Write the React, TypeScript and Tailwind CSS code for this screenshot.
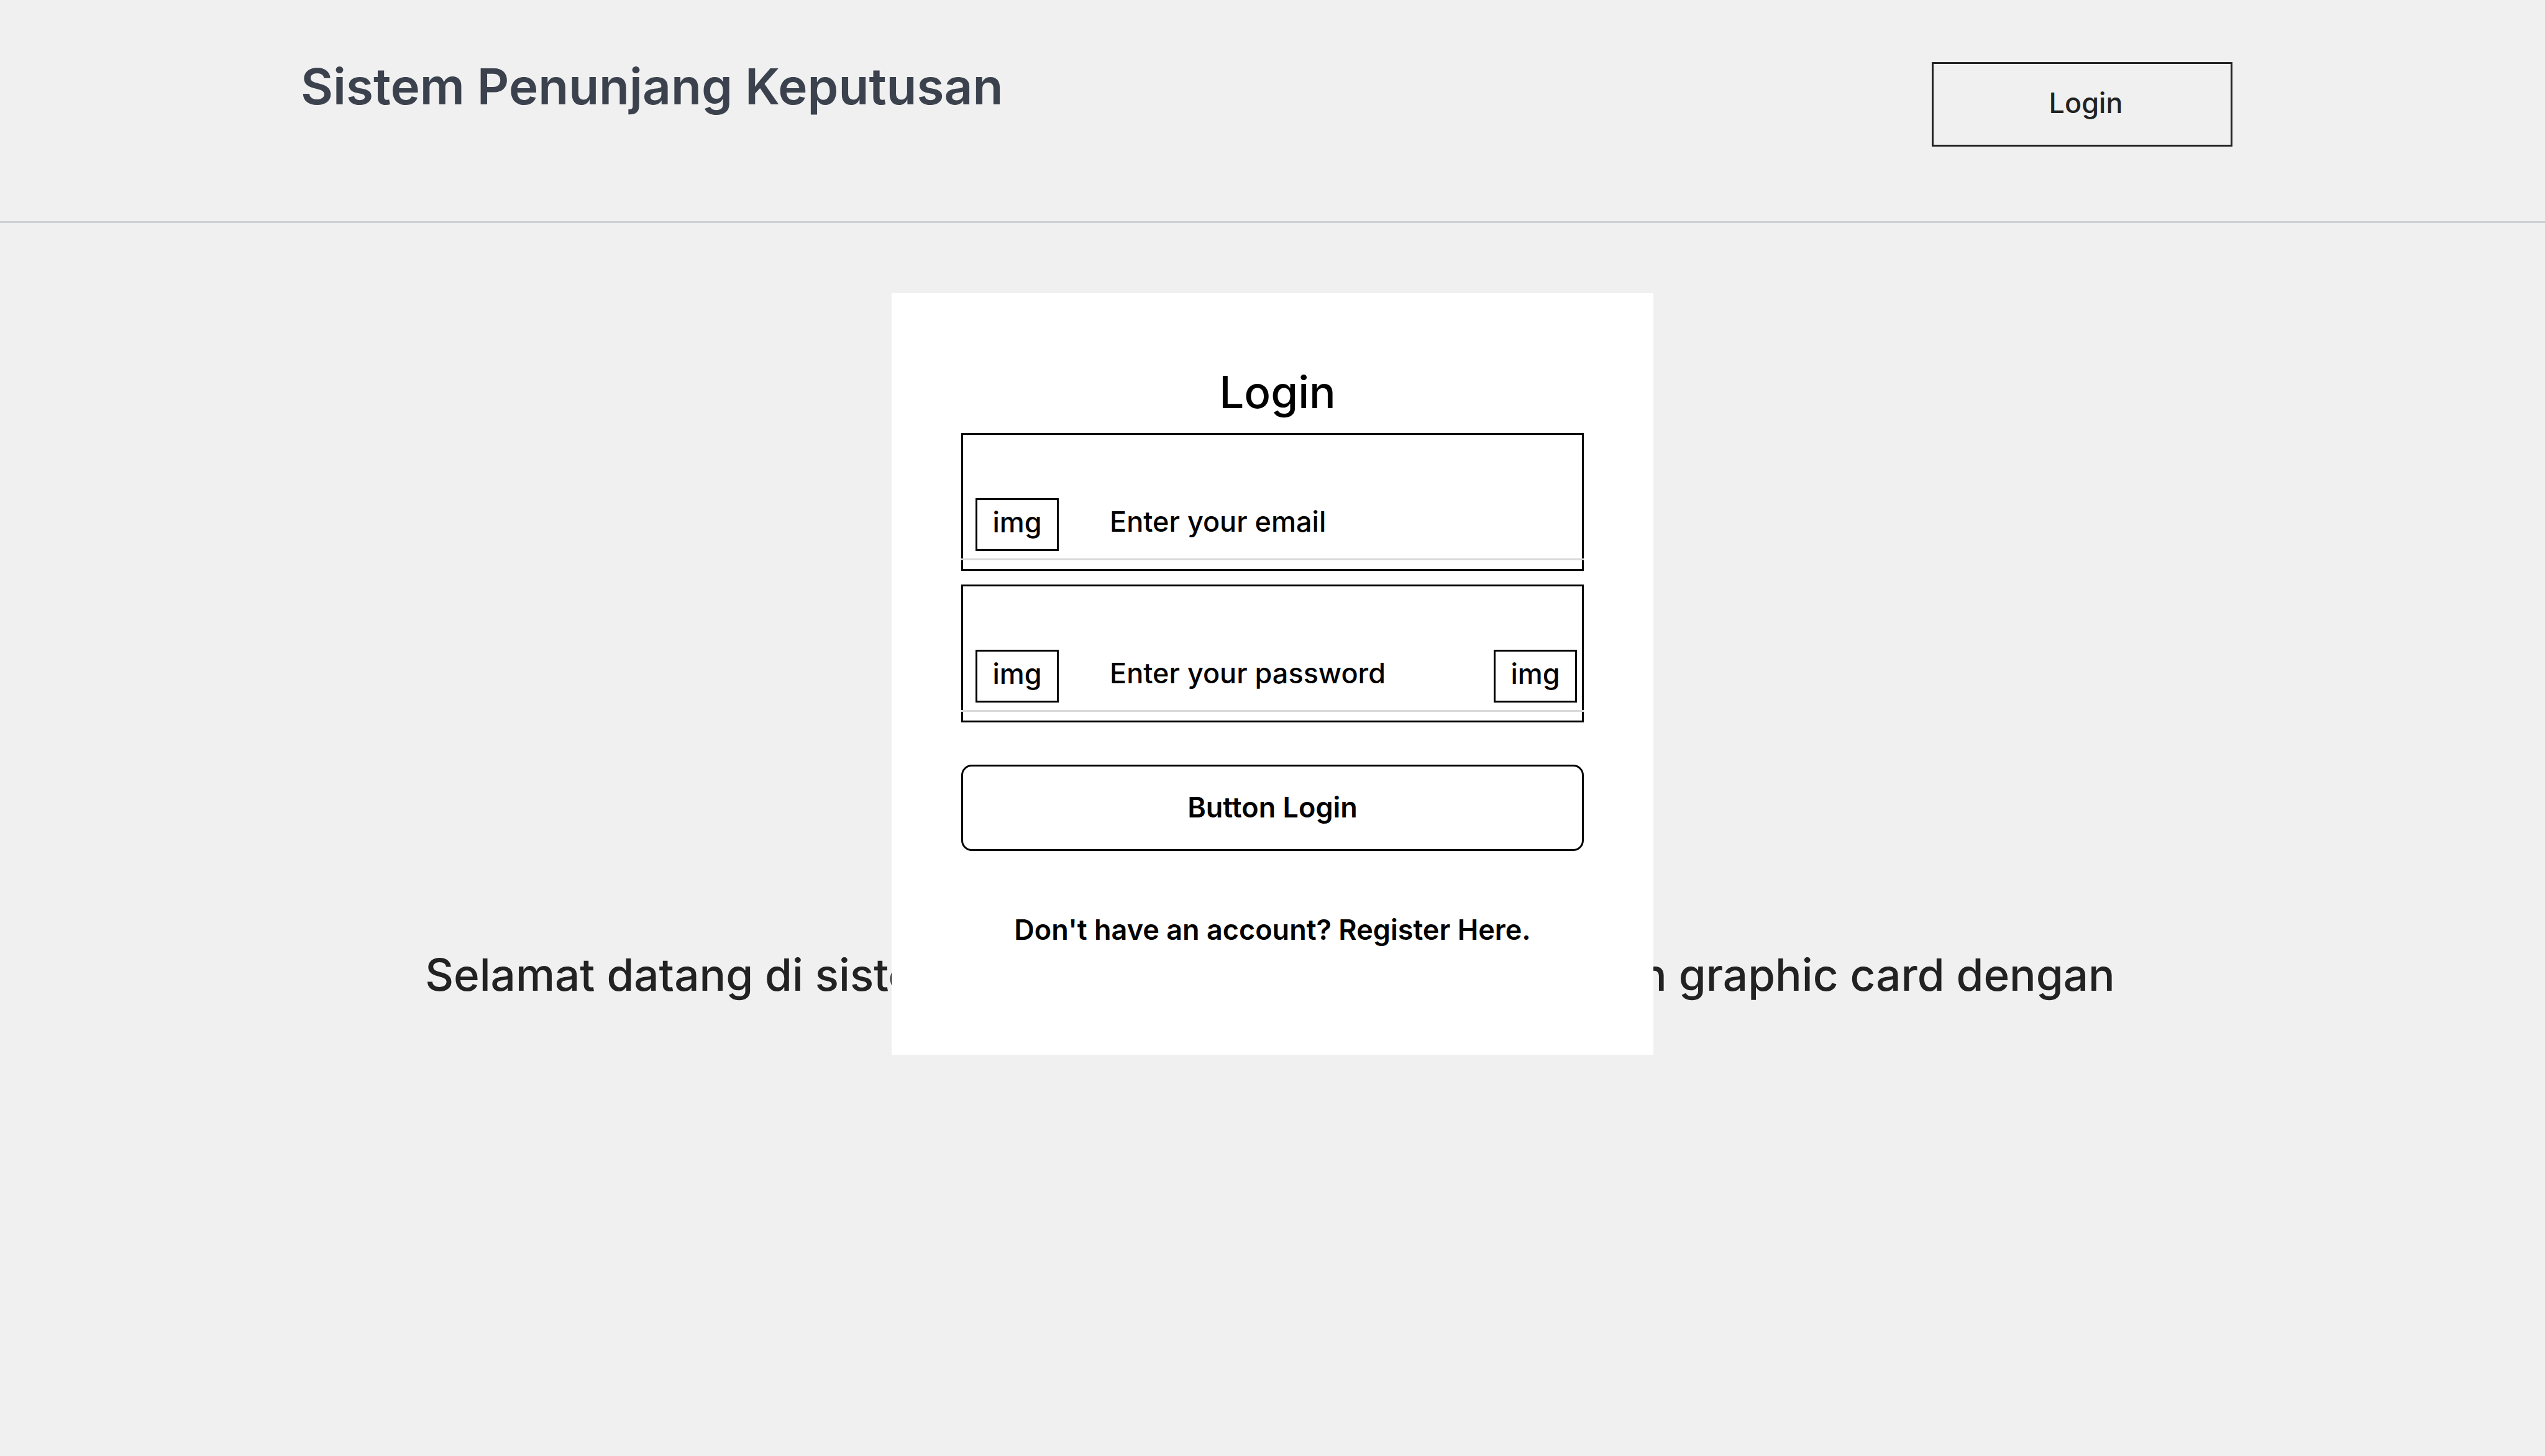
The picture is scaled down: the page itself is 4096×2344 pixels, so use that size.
import type { ReactNode } from "react";

function ImageBox({ children }: { children: ReactNode }) {
  return (
    <span className="flex h-[85px] w-[134px] shrink-0 items-center justify-center border-3 border-black pb-2">
      {children}
    </span>
  );
}

type FieldProps = {
  id: string;
  type: string;
  label: string;
  placeholder: string;
  action?: ReactNode;
};

function Field({ id, type, label, placeholder, action }: FieldProps) {
  return (
    <div className="relative flex items-center border-3 border-black pt-[102px] pr-2 pb-[29px] pl-5">
      <label htmlFor={id}>
        <ImageBox>img</ImageBox>
      </label>
      <input
        id={id}
        type={type}
        aria-label={label}
        placeholder={placeholder}
        className="ml-[82px] h-[85px] min-w-0 flex-1 bg-transparent pb-2.5 outline-none placeholder:text-black placeholder:opacity-100"
      />
      {action}
      <span className="absolute -inset-x-[3px] bottom-3.5 h-[3px] bg-[#d9d9d9]" />
    </div>
  );
}

function Header() {
  return (
    <header className="flex items-start justify-between border-b-3 border-[#cdcfd4] pt-[90px] pr-[503px] pb-[120px] pl-[484px]">
      <h1 className="text-[80px] leading-[97px] font-semibold text-[#3c424d]">
        Sistem Penunjang Keputusan
      </h1>
      <button
        type="button"
        className="mt-2.5 h-[136px] w-[484px] border-3 border-[#222222] pb-1 pl-3 text-[#222222]"
      >
        Login
      </button>
    </header>
  );
}

function LoginCard() {
  return (
    <form
      className="z-10 col-start-1 row-start-1 mt-[113px] flex w-[1226px] flex-col self-start bg-white px-28 pt-[116px] pb-[174px] text-black"
      onSubmit={(event) => event.preventDefault()}
    >
      <h2 className="pl-4 text-center text-[71px] leading-[86px]">Login</h2>
      <div className="mt-[23px] flex flex-col gap-[22px]">
        <Field id="email" type="email" label="Email" placeholder="Enter your email" />
        <Field
          id="password"
          type="password"
          label="Password"
          placeholder="Enter your password"
          action={
            <button type="button" aria-label="Show password">
              <ImageBox>img</ImageBox>
            </button>
          }
        />
      </div>
      <button
        type="submit"
        className="mt-[68px] h-[139px] rounded-[17px] border-3 border-black pb-0.5 font-semibold"
      >
        Button Login
      </button>
      <a href="#register" className="mt-[100px] text-center font-semibold">
        Don't have an account? Register Here.
      </a>
    </form>
  );
}

export default function App() {
  return (
    <div className="min-h-screen bg-[#f0f0f0] font-['Inter',sans-serif] text-[45px] leading-[54px] font-medium">
      <Header />
      <main className="grid grid-cols-1 justify-items-center">
        <p className="col-start-1 row-start-1 mt-[1167px] pr-2 text-center text-[71px] leading-[86px] whitespace-nowrap text-[#222222]">
          Selamat datang di sistem pendukung keputusan pembelian graphic card dengan
        </p>
        <LoginCard />
      </main>
    </div>
  );
}
